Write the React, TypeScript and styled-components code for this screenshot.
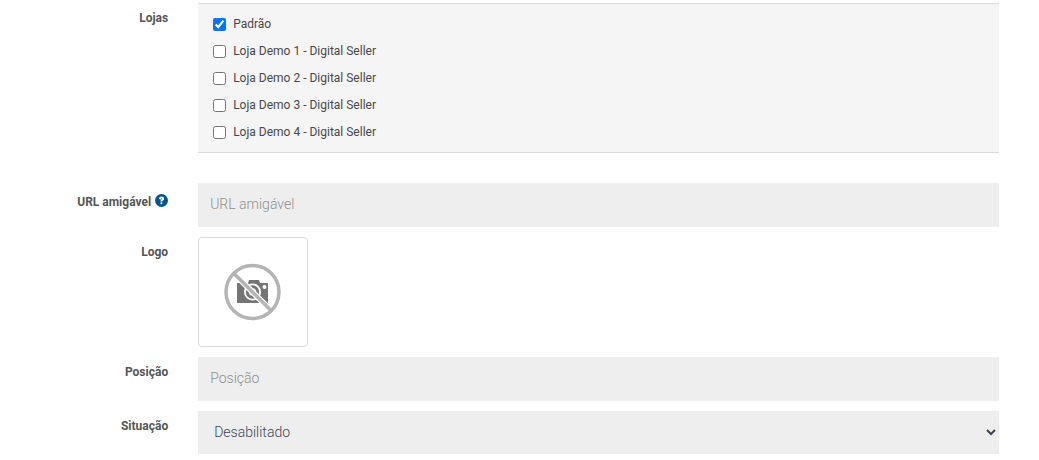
import React from "react";
import styled, { createGlobalStyle } from "styled-components";

const GlobalStyle = createGlobalStyle`
  *, *::before, *::after { box-sizing: border-box; }
  body {
    margin: 0;
    background: #fff;
    color: #4d4d4d;
    font-family: Roboto, "Liberation Sans", sans-serif;
    font-size: 12px;
    line-height: 18px;
  }
`;

const Form = styled.form`
  display: flex;
  flex-direction: column;
  gap: 10px;
  padding: 3px 25px 6px 17px;
`;

const Row = styled.div<{ $spaced?: boolean }>`
  display: grid;
  grid-template-columns: minmax(0, 1fr) minmax(0, 5fr);
  margin-bottom: ${(p) => (p.$spaced ? 20 : 0)}px;
`;

const LabelCell = styled.div<{ $withHelp?: boolean }>`
  display: flex;
  justify-content: flex-end;
  align-items: flex-start;
  gap: 4px;
  padding: ${(p) => (p.$withHelp ? 10 : 6)}px 15px 0;
  font-weight: 700;
  color: #555;
  text-align: right;
`;

const HelpIcon = styled.svg`
  width: 13px;
  height: 13px;
  margin-top: 1px;
  flex: none;
`;

const FieldCell = styled.div`
  display: flex;
  padding: 0 15px;
`;

const StoreList = styled.div`
  flex: 1;
  padding: 7px 15px 6px;
  background: #f5f5f5;
  border: solid #dadada;
  border-width: 1px 0;
`;

const StoreOption = styled.label`
  display: flex;
  align-items: center;
  height: 27px;
  color: #484848;
`;

const StoreName = styled.span`
  padding-bottom: 2px;
`;

const Checkbox = styled.input`
  width: 13px;
  height: 13px;
  margin: 0 7px 0 0;
`;

const TextInput = styled.input`
  flex: 1;
  min-width: 0;
  height: 44px;
  padding: 0 12px 2px;
  border: 0;
  border-radius: 0;
  background: #eee;
  color: #3d4455;
  font: 300 14px/20px Roboto, "Liberation Sans", sans-serif;

  &::placeholder {
    color: #8f8f8f;
    opacity: 1;
  }
`;

const Select = styled.select`
  flex: 1;
  min-width: 0;
  height: 43px;
  padding: 0 0 2px 12px;
  border: 0;
  border-radius: 0;
  background: #eee;
  color: #3d4455;
  font: 300 14px/20px Roboto, "Liberation Sans", sans-serif;
`;

const Thumbnail = styled.button`
  display: flex;
  align-items: center;
  justify-content: center;
  width: 110px;
  height: 110px;
  padding: 0;
  border: 1px solid #dadada;
  border-radius: 4px;
  background: #fff;
  cursor: pointer;
`;

const NoImage = () => (
  <svg width="100" height="100" viewBox="0 0 100 100" aria-hidden="true">
    <path d="M34 41H45L46 38H56L57 41H65V61H34Z" fill="#757575" />
    <circle cx="61.5" cy="45" r="2" fill="#fff" />
    <circle cx="49.5" cy="50" r="8.5" fill="#fff" />
    <circle cx="49.5" cy="50" r="5.2" fill="none" stroke="#757575" strokeWidth="3" />
    <path d="M30 30.5L69 69.5" stroke="#fff" strokeWidth="6" />
    <path d="M30.5 31L68.5 69" stroke="#b4b4b4" strokeWidth="3.6" />
    <circle cx="49.5" cy="50" r="26.5" fill="none" stroke="#b4b4b4" strokeWidth="3.5" />
  </svg>
);

const stores = [
  "Padrão",
  "Loja Demo 1 - Digital Seller",
  "Loja Demo 2 - Digital Seller",
  "Loja Demo 3 - Digital Seller",
  "Loja Demo 4 - Digital Seller",
];

export default function App() {
  return (
    <>
      <GlobalStyle />
      <Form>
        <Row $spaced role="group" aria-labelledby="stores-label">
          <LabelCell id="stores-label">Lojas</LabelCell>
          <FieldCell>
            <StoreList>
              {stores.map((store, i) => (
                <StoreOption key={store}>
                  <Checkbox type="checkbox" name="store" defaultChecked={i === 0} />
                  <StoreName>{store}</StoreName>
                </StoreOption>
              ))}
            </StoreList>
          </FieldCell>
        </Row>
        <Row>
          <LabelCell $withHelp>
            <label htmlFor="keyword">URL amigável</label>
            <HelpIcon viewBox="0 0 512 512" aria-hidden="true">
              <circle cx="256" cy="256" r="256" fill="#00578f" />
              <path
                d="M160 190C168 137 205 103 261 103C319 103 359 138 359 187C359 226 334 247 309 263C293 274 290 281 290 300H215V284C215 249 230 230 254 215C269 205 276 201 276 191C276 180 269 175 258 175C243 175 234 184 226 228Z"
                fill="#fff"
              />
              <circle cx="252" cy="366" r="41" fill="#fff" />
            </HelpIcon>
          </LabelCell>
          <FieldCell>
            <TextInput id="keyword" type="text" placeholder="URL amigável" />
          </FieldCell>
        </Row>
        <Row>
          <LabelCell>
            <label htmlFor="logo">Logo</label>
          </LabelCell>
          <FieldCell>
            <Thumbnail id="logo" type="button">
              <NoImage />
            </Thumbnail>
          </FieldCell>
        </Row>
        <Row>
          <LabelCell>
            <label htmlFor="position">Posição</label>
          </LabelCell>
          <FieldCell>
            <TextInput id="position" type="text" placeholder="Posição" />
          </FieldCell>
        </Row>
        <Row>
          <LabelCell>
            <label htmlFor="status">Situação</label>
          </LabelCell>
          <FieldCell>
            <Select id="status" defaultValue="0">
              <option value="1">Habilitado</option>
              <option value="0">Desabilitado</option>
            </Select>
          </FieldCell>
        </Row>
      </Form>
    </>
  );
}
